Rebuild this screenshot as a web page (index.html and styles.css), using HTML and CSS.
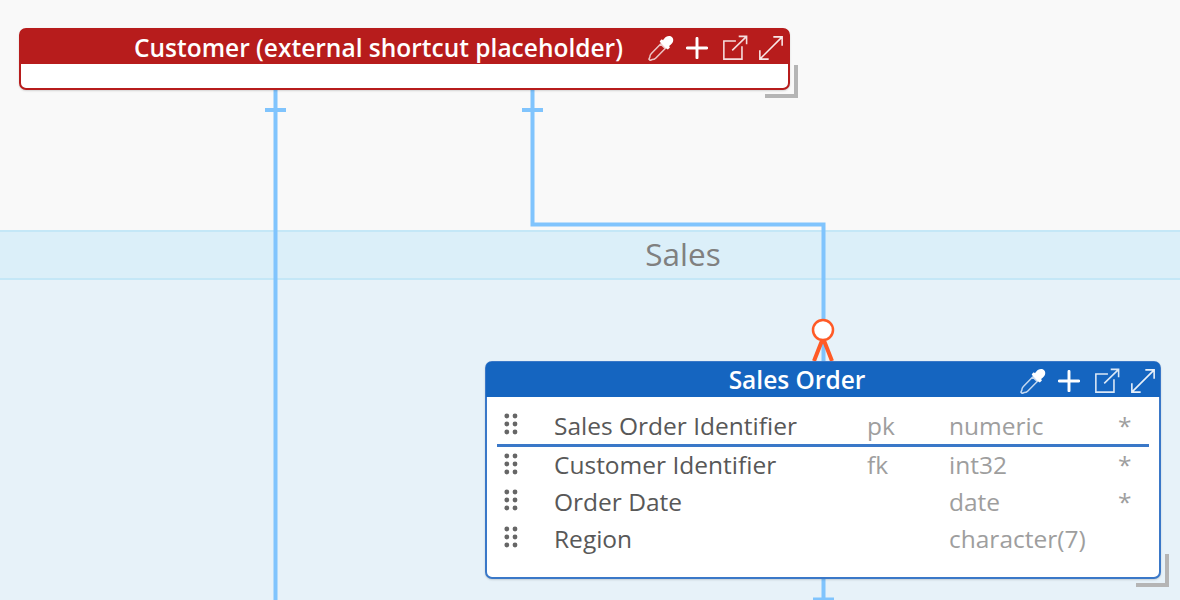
FILE: index.html
```html
<!DOCTYPE html>
<html lang="en">
<head>
<meta charset="utf-8">
<title>Sales model</title>
<link rel="stylesheet" href="styles.css">
</head>
<body>
<svg class="defs" width="0" height="0" aria-hidden="true">
  <symbol id="i-drop" viewBox="0 0 28 28">
    <path d="M16.2 5.6 C17 4.6 18 3.2 19.6 2 C21.6 0.6 24.6 0.8 26 2.4 C27.6 4 27.6 6.8 26.2 8.6 C25 10 23.8 10.9 22.8 11.8 L23.6 13.4 L21.4 15.6 L19 14.2 L14 9.2 L12.6 6.8 L14.8 4.6 Z" fill="#fff"/>
    <path d="M13.6 9.6 L18.6 14.6 L8.2 25 C7 26.2 5.8 26.4 4.6 26.4 L2.4 27.4 L1 26 L2 23.8 C2 22.4 2.2 21.4 3.4 20.2 Z" fill="none" stroke="#fff" stroke-opacity=".75" stroke-width="1.6" stroke-linejoin="round"/>
  </symbol>
  <symbol id="i-plus" viewBox="0 0 24 24">
    <path d="M12 1.5 V22.5 M1.5 12 H22.5" fill="none" stroke="#fff" stroke-width="3.2" stroke-linecap="round"/>
  </symbol>
  <symbol id="i-ext" viewBox="0 0 28 28">
    <path d="M21.5 12 V26 H2 V6.5 H15" fill="none" stroke="#fff" stroke-opacity=".85" stroke-width="1.7"/>
    <path d="M11 16.5 L26.5 1.5 M18 1.5 H26.5 V10" fill="none" stroke="#fff" stroke-opacity=".85" stroke-width="1.7"/>
  </symbol>
  <symbol id="i-exp" viewBox="0 0 28 28">
    <path d="M2 26 L26 2 M16.5 2 H26 V11.5 M2 16.5 V26 H11.5" fill="none" stroke="#fff" stroke-opacity=".9" stroke-width="1.7"/>
  </symbol>
  <symbol id="i-grip" viewBox="0 0 14 22">
    <g fill="#666">
      <circle cx="2.8" cy="3" r="2.4"/><circle cx="11" cy="3" r="2.4"/>
      <circle cx="2.8" cy="11" r="2.4"/><circle cx="11" cy="11" r="2.4"/>
      <circle cx="2.8" cy="19" r="2.4"/><circle cx="11" cy="19" r="2.4"/>
    </g>
  </symbol>
</svg>

<main class="canvas">
  <section class="area-default"></section>
  <section class="area-sales">
    <header class="area-title">Sales</header>
    <div class="area-body"></div>
  </section>

  <svg class="links" width="1180" height="600" viewBox="0 0 1180 600" aria-hidden="true">
    <g class="link">
      <path d="M275.5 90 V600 M265 110 H286"/>
      <path d="M532.5 90 V224.5 H823.5 V361 M522 110 H543"/>
      <path d="M823.5 579 V600 M813 599.5 H834"/>
    </g>
    <g class="crow">
      <path d="M823 338 L814 361 M823 338 L832 361"/>
      <circle cx="823" cy="330" r="10"/>
    </g>
  </svg>

  <article class="entity entity-shortcut">
    <header class="entity-head">
      <h2 class="entity-title">Customer (external shortcut placeholder)</h2>
      <div class="tools">
        <svg class="tool tool-drop"><use href="#i-drop"/></svg>
        <svg class="tool tool-plus"><use href="#i-plus"/></svg>
        <svg class="tool tool-ext"><use href="#i-ext"/></svg>
        <svg class="tool tool-exp"><use href="#i-exp"/></svg>
      </div>
    </header>
    <div class="entity-body"></div>
    <span class="resize"></span>
  </article>

  <article class="entity entity-order">
    <header class="entity-head">
      <h2 class="entity-title">Sales Order</h2>
      <div class="tools">
        <svg class="tool tool-drop"><use href="#i-drop"/></svg>
        <svg class="tool tool-plus"><use href="#i-plus"/></svg>
        <svg class="tool tool-ext"><use href="#i-ext"/></svg>
        <svg class="tool tool-exp"><use href="#i-exp"/></svg>
      </div>
    </header>
    <div class="entity-body fields">
      <div class="field field-pk">
        <svg class="grip"><use href="#i-grip"/></svg>
        <span class="f-name">Sales Order Identifier</span><span class="f-key">pk</span><span class="f-type">numeric</span><span class="f-req">*</span>
      </div>
      <div class="field field-first">
        <svg class="grip"><use href="#i-grip"/></svg>
        <span class="f-name">Customer Identifier</span><span class="f-key">fk</span><span class="f-type">int32</span><span class="f-req">*</span>
      </div>
      <div class="field">
        <svg class="grip"><use href="#i-grip"/></svg>
        <span class="f-name">Order Date</span><span class="f-key"></span><span class="f-type">date</span><span class="f-req">*</span>
      </div>
      <div class="field">
        <svg class="grip"><use href="#i-grip"/></svg>
        <span class="f-name">Region</span><span class="f-key"></span><span class="f-type">character(7)</span><span class="f-req"></span>
      </div>
    </div>
    <span class="resize"></span>
  </article>
</main>
</body>
</html>
```
FILE: styles.css
```css
* { box-sizing: border-box; }
html, body { margin: 0; padding: 0; }
body { width: 1180px; height: 600px; overflow: hidden; font-family: "Open Sans", "Noto Sans", sans-serif; }
.defs { position: absolute; }

.canvas { position: relative; width: 1180px; height: 600px; display: flex; flex-direction: column; overflow: hidden; background: #f9f9f9; }
.area-default { height: 230px; flex: none; }
.area-sales { flex: 1; display: flex; flex-direction: column; background: #e7f2f9; }
.area-title { height: 50px; flex: none; display: flex; align-items: center; justify-content: center; padding: 0 0 3px 186px; font-size: 31.5px; color: #808080; background: #dbeff9; border-top: 2px solid #c4e7f7; border-bottom: 2px solid #c4e7f7; }
.area-body { flex: 1; }

.links { position: absolute; left: 0; top: 0; }
.link path { fill: none; stroke: #80c4fd; stroke-width: 4; }
.crow path { fill: none; stroke: #ff5a26; stroke-width: 4; }
.crow circle { fill: #fff; stroke: #ff5a26; stroke-width: 2.5; }

.entity { position: absolute; display: flex; flex-direction: column; background: #fff; border-radius: 7px; border: 2px solid; box-shadow: 0 1px 2px rgba(0,0,0,.15); }
.entity-shortcut { left: 19px; top: 28px; width: 771px; height: 62px; border-color: #b71c1c; }
.entity-order { left: 485px; top: 361px; width: 676px; height: 218px; border-color: #3a78c8; }
.entity-head { position: relative; height: 35px; flex: none; display: flex; align-items: center; justify-content: center; padding: 4px 52px 0 0; border-radius: 5px 5px 0 0; margin: -1px -1px 0; color: #fff; }
.entity-shortcut .entity-head { background: #b71c1c; }
.entity-order .entity-head { background: #1565c0; padding-top: 2px; }
.entity-title { margin: 0; font-size: 24.5px; font-weight: 600; line-height: 1; white-space: nowrap; }

.tools { position: absolute; right: 5px; top: 6px; display: flex; align-items: center; gap: 11px; }
.entity-order .tools { right: 4px; }
.tool { display: block; flex: none; width: 26px; height: 26px; }
.tool-plus { width: 22px; height: 22px; margin-left: 1px; }
.tool-ext { margin-left: 3px; margin-right: -1px; }

.entity-body { flex: 1; }
.fields { padding: 12px 10px 0 10px; display: flex; flex-direction: column; }
.field { display: grid; grid-template-columns: 57px 313px 82px 169px 1fr; align-items: center; height: 37px; font-size: 24.5px; color: #9e9e9e; white-space: nowrap; }
.grip { display: block; width: 14px; height: 22px; margin-left: 7px; margin-top: -4px; }
.f-name { color: #585858; }
.field-pk { height: 38px; padding-bottom: 3px; border-bottom: 3px solid #3a78c8; }
.field-first { height: 36px; padding-bottom: 2px; }
.field-first .grip { margin-top: -1px; }

.resize { position: absolute; right: -10px; bottom: -10px; width: 33px; height: 33px; border-right: 4px solid #b5b5b5; border-bottom: 4px solid #b5b5b5; }
```
